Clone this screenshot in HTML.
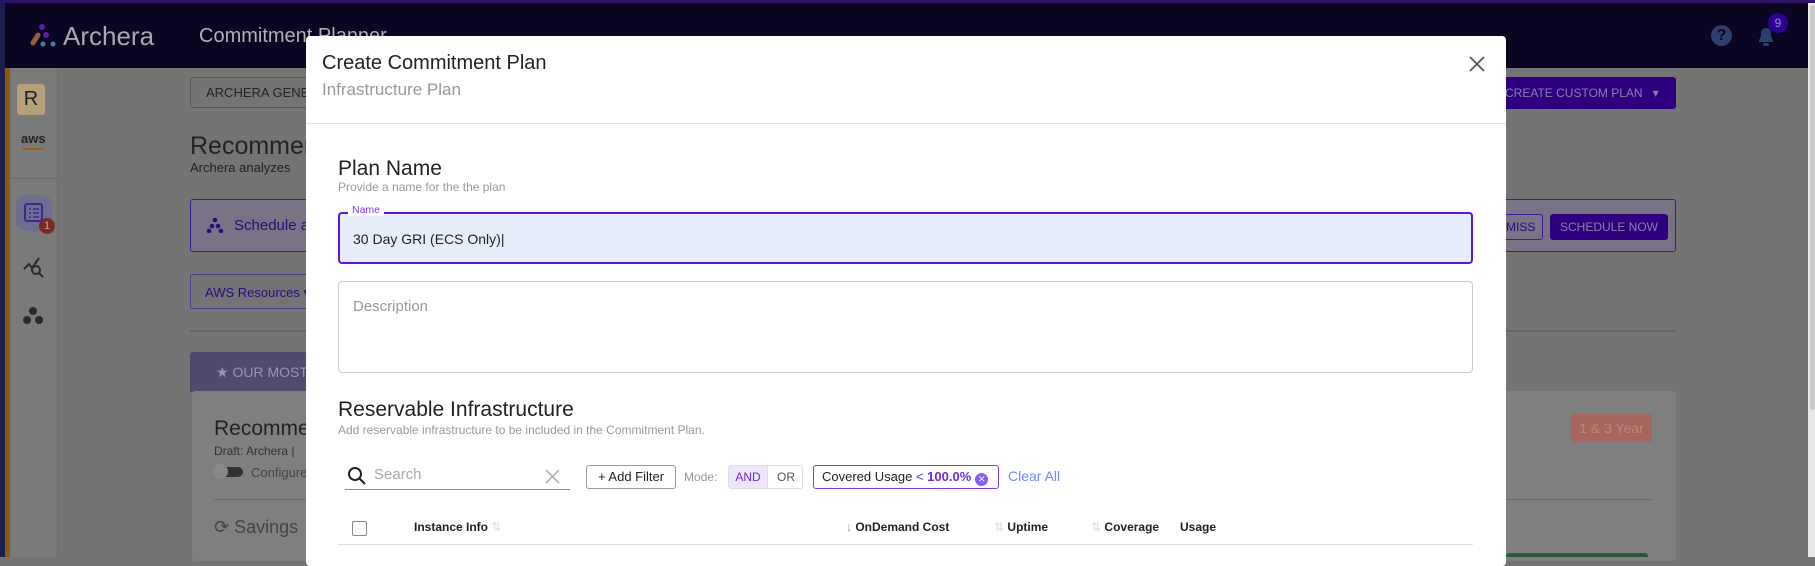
<!DOCTYPE html>
<html><head><meta charset="utf-8"><style>
*{box-sizing:border-box;margin:0;padding:0}
body{width:1815px;height:557px;overflow:hidden;background:#747474;font-family:"Liberation Sans",sans-serif;position:relative}
.a{position:absolute}
.t{position:absolute;white-space:nowrap}
</style></head><body>
<div class="a" style="left:0;top:0;width:1815px;height:3px;background:#2b1466"></div>
<div class="a" style="left:0;top:3px;width:1808px;height:65px;background:#0a0520"></div>
<div class="a" style="left:0;top:3px;width:5px;height:554px;background:#1c1c4e"></div>
<div class="a" style="left:5px;top:68px;width:5px;height:489px;background:#8a5a12"></div>
<div class="a" style="left:10px;top:68px;width:48px;height:489px;background:#7a7a7a;border-right:1px solid #6e6e6e"></div>
<svg class="a" style="left:28px;top:22px" width="32" height="26"><circle cx="14" cy="5" r="3" fill="#5a1fb0"/><circle cx="18" cy="13" r="3" fill="#5a1fb0"/><line x1="10" y1="13" x2="5" y2="21" stroke="#9a5a48" stroke-width="5" stroke-linecap="round"/><circle cx="15" cy="22" r="2.5" fill="#4a7aa0"/><circle cx="25" cy="22" r="2.5" fill="#4a7aa0"/></svg>
<div class="t" style="left:63px;top:21px;font-size:26px;color:#a8a8b0">Archera</div>
<div class="t" style="left:199px;top:25px;font-size:20px;color:#b0b0b8">Commitment Planner</div>
<div class="a" style="left:1711px;top:25px;width:21px;height:21px;border-radius:50%;background:#2e3f6e;color:#0a0520;font-weight:bold;font-size:16px;text-align:center;line-height:21px">?</div>
<svg class="a" style="left:1756px;top:25px" width="20" height="22"><path d="M3 17 L3 15 Q5 13 5 9 Q5 3 10 3 Q15 3 15 9 Q15 13 17 15 L17 17 Z" fill="#2e3f6e"/><rect x="7" y="18" width="6" height="3" rx="1.5" fill="#2e3f6e"/></svg>
<div class="a" style="left:1768px;top:13px;width:20px;height:20px;border-radius:50%;background:#2c0090;color:#9a8ac0;font-size:12px;text-align:center;line-height:20px">9</div>
<div class="a" style="left:17px;top:84px;width:28px;height:31px;background:#b5a07a;border-radius:3px;font-size:20px;text-align:center;line-height:31px;color:#222">R</div>
<div class="t" style="left:21px;top:131px;font-size:13px;color:#222;font-weight:bold">aws</div>
<div class="a" style="left:22px;top:146px;width:22px;height:4px;border-bottom:2px solid #9a6010;border-radius:0 0 10px 10px"></div>
<div class="a" style="left:10px;top:178px;width:48px;height:1px;background:#6a6a6a"></div>
<div class="a" style="left:16px;top:195px;width:36px;height:36px;background:#6e6e92;border-radius:10px"></div>
<svg class="a" style="left:24px;top:203px" width="19" height="19"><rect x="1" y="1" width="17" height="17" rx="2" stroke="#3a2a90" stroke-width="2" fill="none"/><path d="M5 6h2M9 6h6M5 10h2M9 10h6M5 14h2M9 14h6" stroke="#3a2a90" stroke-width="1.6"/></svg>
<div class="a" style="left:39px;top:218px;width:16px;height:16px;border-radius:50%;background:#7a2a22;color:#c8a0a0;font-size:11px;text-align:center;line-height:16px">1</div>
<svg class="a" style="left:22px;top:255px" width="24" height="24"><path d="M2 14 L7 9 L10 13 L17 3" stroke="#2a2a2a" stroke-width="2" fill="none"/><circle cx="14" cy="15" r="4" stroke="#2a2a2a" stroke-width="2" fill="none"/><line x1="17" y1="18" x2="21" y2="22" stroke="#2a2a2a" stroke-width="2"/></svg>
<svg class="a" style="left:22px;top:306px" width="22" height="20"><circle cx="11" cy="5" r="4" fill="#2a2a2a"/><circle cx="5" cy="14" r="4" fill="#2a2a2a"/><circle cx="17" cy="14" r="4" fill="#2a2a2a"/></svg>
<div class="a" style="left:190px;top:77px;width:130px;height:31px;border:1px solid #555;border-radius:3px"></div>
<div class="t" style="left:206px;top:85px;font-size:13px;color:#222">ARCHERA GENE</div>
<div class="t" style="left:190px;top:132px;font-size:25px;color:#222">Recommen</div>
<div class="t" style="left:190px;top:160px;font-size:13px;color:#222">Archera analyzes</div>
<div class="a" style="left:1499px;top:77px;width:177px;height:32px;background:#2e0080;border-radius:3px"></div>
<div class="t" style="left:1505px;top:86px;font-size:12px;color:#8a80b0">CREATE CUSTOM PLAN &nbsp;&nbsp;▾</div>
<div class="a" style="left:190px;top:199px;width:1486px;height:53px;border:1px solid #3a1a99;border-radius:3px;background:#7a7386"></div>
<svg class="a" style="left:206px;top:217px" width="18" height="16"><circle cx="9" cy="3" r="2.3" fill="#2a0a80"/><circle cx="6" cy="9" r="2.3" fill="#2a0a80"/><circle cx="12" cy="9" r="2.3" fill="#2a0a80"/><circle cx="3" cy="14" r="2.3" fill="#2a0a80"/><circle cx="15" cy="14" r="2.3" fill="#2a0a80"/></svg>
<div class="t" style="left:234px;top:217px;font-size:15px;color:#2a0a80">Schedule a</div>
<div class="a" style="left:1480px;top:214px;width:63px;height:26px;border:1px solid #3a1a99;border-radius:3px"></div>
<div class="t" style="left:1506px;top:220px;font-size:12px;color:#2a0a80">MISS</div>
<div class="a" style="left:1550px;top:214px;width:118px;height:26px;background:#2e0080;border-radius:3px;color:#8a80b0;font-size:12px;text-align:center;line-height:26px">SCHEDULE NOW</div>
<div class="a" style="left:190px;top:274px;width:130px;height:35px;border:1px solid #4a3a8a;border-radius:3px"></div>
<div class="t" style="left:205px;top:285px;font-size:13px;color:#2a0a80">AWS Resources ▾</div>
<div class="a" style="left:190px;top:330px;width:1486px;height:2px;background:#656565"></div>
<div class="a" style="left:190px;top:352px;width:130px;height:40px;background:#4f4a6e;border-radius:3px 3px 0 0"></div>
<div class="t" style="left:216px;top:364px;font-size:14px;color:#9a98b0">★ OUR MOST</div>
<div class="a" style="left:192px;top:391px;width:1484px;height:170px;background:#7f7f7f;border-radius:3px"></div>
<div class="t" style="left:214px;top:417px;font-size:21px;color:#222">Recomme</div>
<div class="t" style="left:214px;top:444px;font-size:12px;color:#333">Draft: Archera |</div>
<div class="a" style="left:215px;top:467px;width:28px;height:10px;border-radius:5px;background:#333"></div>
<div class="a" style="left:213px;top:464px;width:15px;height:15px;border-radius:50%;background:#888"></div>
<div class="t" style="left:251px;top:465px;font-size:13px;color:#444">Configure</div>
<div class="a" style="left:214px;top:499px;width:1438px;height:1px;background:#6a6a6a"></div>
<div class="t" style="left:214px;top:517px;font-size:18px;color:#444">⟳ Savings</div>
<div class="a" style="left:1571px;top:414px;width:81px;height:28px;background:#a6655d;border-radius:3px;color:#b88880;font-size:14px;text-align:center;line-height:28px">1 &amp; 3 Year</div>
<div class="a" style="left:1506px;top:553px;width:142px;height:4px;background:#2a5a3a;border-radius:3px 3px 0 0"></div>
<div class="a" style="left:1808px;top:3px;width:7px;height:554px;background:#e8e8e8"></div>
<div class="a" style="left:1810px;top:5px;width:5px;height:405px;background:#c8c8c8;border-radius:3px"></div>
<div class="a" style="left:306px;top:36px;width:1200px;height:530px;background:#fff;border-radius:4px"></div>
<div class="t" style="left:322px;top:52px;font-size:20px;color:#222">Create Commitment Plan</div>
<div class="t" style="left:322px;top:80px;font-size:17px;color:#999">Infrastructure Plan</div>
<svg class="a" style="left:1468px;top:55px" width="18" height="18"><path d="M2 2L16 16M16 2L2 16" stroke="#555" stroke-width="1.8"/></svg>
<div class="a" style="left:306px;top:123px;width:1200px;height:1px;background:#e0e0e0"></div>
<div class="t" style="left:338px;top:157px;font-size:21px;color:#222">Plan Name</div>
<div class="t" style="left:338px;top:180px;font-size:12px;color:#999">Provide a name for the the plan</div>
<div class="a" style="left:338px;top:212px;width:1135px;height:52px;border:2px solid #5b16e0;border-radius:4px;background:#e8edfb"></div>
<div class="t" style="left:348px;top:204px;font-size:10.5px;color:#7c3aed;background:#fff;padding:0 4px;line-height:12px">Name</div>
<div class="t" style="left:353px;top:231px;font-size:14px;color:#222">30 Day GRI (ECS Only)|</div>
<div class="a" style="left:338px;top:281px;width:1135px;height:92px;border:1px solid #ccc;border-radius:4px"></div>
<div class="t" style="left:353px;top:298px;font-size:15px;color:#999">Description</div>
<div class="t" style="left:338px;top:398px;font-size:21px;color:#222">Reservable Infrastructure</div>
<div class="t" style="left:338px;top:423px;font-size:12px;color:#999">Add reservable infrastructure to be included in the Commitment Plan.</div>
<svg class="a" style="left:347px;top:466px" width="20" height="20"><circle cx="8" cy="8" r="6" stroke="#222" stroke-width="2" fill="none"/><line x1="12.5" y1="12.5" x2="18" y2="18" stroke="#222" stroke-width="2"/></svg>
<div class="t" style="left:374px;top:466px;font-size:15px;color:#aaa">Search</div>
<svg class="a" style="left:545px;top:469px" width="15" height="15"><path d="M1 1L14 14M14 1L1 14" stroke="#aaa" stroke-width="1.5"/></svg>
<div class="a" style="left:345px;top:489px;width:225px;height:1px;background:#888"></div>
<div class="a" style="left:586px;top:465px;width:90px;height:24px;border:1px solid #999;border-radius:3px;font-size:13px;color:#222;text-align:center;line-height:22px">+ Add Filter</div>
<div class="t" style="left:684px;top:470px;font-size:12px;color:#999">Mode:</div>
<div class="a" style="left:728px;top:465px;width:75px;height:24px;border:1px solid #ddd;border-radius:3px;overflow:hidden"><div style="position:absolute;left:0;top:0;width:38px;height:24px;background:#efe6fd;color:#6d28d9;font-size:12px;text-align:center;line-height:22px">AND</div><div style="position:absolute;left:38px;top:0;width:37px;height:24px;border-left:1px solid #ddd;color:#555;font-size:12px;text-align:center;line-height:22px">OR</div></div>
<div class="a" style="left:813px;top:465px;width:186px;height:24px;border:1px solid #7c3aed;border-radius:3px;font-size:13px;line-height:22px;padding-left:8px;color:#222">Covered Usage <span style="color:#6d28d9">&lt; <b>100.0%</b></span><span style="display:inline-block;width:13px;height:13px;border-radius:50%;background:#8b5cf6;color:#fff;font-size:9px;text-align:center;line-height:13px;margin-left:4px;vertical-align:-1px">✕</span></div>
<div class="t" style="left:1008px;top:468px;font-size:14px;color:#6b8cff">Clear All</div>
<div class="a" style="left:352px;top:521px;width:15px;height:15px;border:1.5px solid #888;border-radius:2px"></div>
<div class="t" style="left:414px;top:520px;font-size:12px;color:#222;font-weight:bold">Instance Info <span style="color:#ddd;font-weight:normal">⇅</span></div>
<div class="t" style="left:846px;top:520px;font-size:12px;color:#222;font-weight:bold"><span style="color:#888;font-weight:normal">↓</span> OnDemand Cost</div>
<div class="t" style="left:994px;top:520px;font-size:12px;color:#222;font-weight:bold"><span style="color:#ddd;font-weight:normal">⇅</span> Uptime</div>
<div class="t" style="left:1091px;top:520px;font-size:12px;color:#222;font-weight:bold"><span style="color:#ddd;font-weight:normal">⇅</span> Coverage</div>
<div class="t" style="left:1180px;top:520px;font-size:12px;color:#222;font-weight:bold">Usage</div>
<div class="a" style="left:338px;top:544px;width:1135px;height:1px;background:#ddd"></div>
</body></html>
